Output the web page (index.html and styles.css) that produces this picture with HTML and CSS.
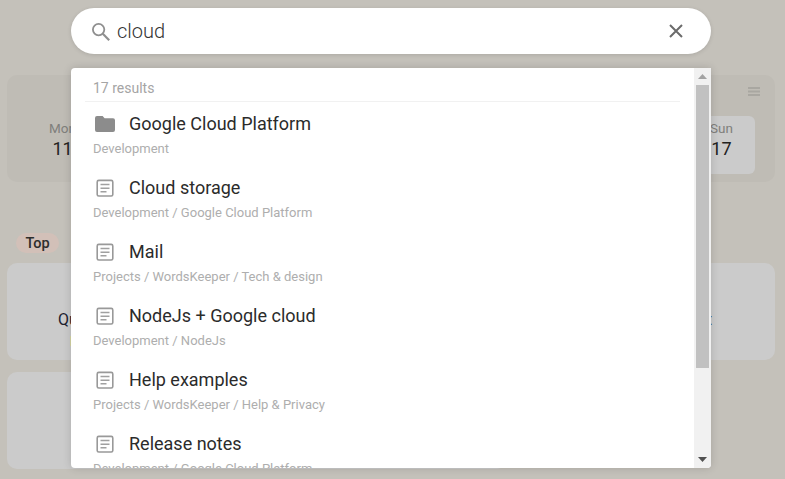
FILE: index.html
```html
<!DOCTYPE html>
<html lang="en">
<head>
<meta charset="utf-8">
<title>Search</title>
<link rel="stylesheet" href="styles.css">
</head>
<body>
<main class="page">
  <section class="week">
    <svg class="week-menu" width="12" height="9" viewBox="0 0 12 9"><path d="M0 0h12v2H0zM0 3.5h12v2H0zM0 7h12v2H0z"/></svg>
    <div class="day"><span class="day-name">Mon</span><span class="day-num">11</span></div>
    <div class="day"><span class="day-name">Tue</span><span class="day-num">12</span></div>
    <div class="day"><span class="day-name">Wed</span><span class="day-num">13</span></div>
    <div class="day"><span class="day-name">Thu</span><span class="day-num">14</span></div>
    <div class="day"><span class="day-name">Fri</span><span class="day-num">15</span></div>
    <div class="day"><span class="day-name">Sat</span><span class="day-num">16</span></div>
    <div class="day day-today"><span class="day-name">Sun</span><span class="day-num">17</span></div>
  </section>
  <span class="badge">Top</span>
  <section class="card card-wide">
    <div class="card-text"><span>Quick notes</span><span>Test</span></div>
    <div class="card-tag"></div>
  </section>
  <section class="card card-short"></section>
</main>

<div class="overlay">
  <div class="searchbar">
    <svg class="search-icon" width="20" height="20" viewBox="0 0 20 20" fill="none" stroke="#8f8f8f" stroke-width="1.8"><circle cx="7.6" cy="7.6" r="5.7"/><path d="M11.8 11.8 L18.2 18.2" stroke-width="2.2"/></svg>
    <span class="query">cloud</span>
    <svg class="clear-icon" width="14" height="14" viewBox="0 0 14 14" fill="none" stroke="#6b6b6b" stroke-width="2"><path d="M1 1 L13 13 M13 1 L1 13"/></svg>
  </div>
  <div class="results">
    <div class="results-list">
      <div class="count">17 results</div>
      <div class="row">
        <div class="row-head">
          <svg class="row-icon" width="20" height="16" viewBox="0 0 20 16"><path d="M2 0h5.6l2 2.2H18a2 2 0 0 1 2 2V14a2 2 0 0 1-2 2H2a2 2 0 0 1-2-2V2a2 2 0 0 1 2-2z" fill="#8c8c8c"/></svg>
          <span class="row-title">Google Cloud Platform</span>
        </div>
        <div class="row-path">Development</div>
      </div>
      <div class="row">
        <div class="row-head">
          <svg class="row-icon" width="20" height="16" viewBox="0 0 20 16"><use href="#doc"/></svg>
          <span class="row-title">Cloud storage</span>
        </div>
        <div class="row-path">Development / Google Cloud Platform</div>
      </div>
      <div class="row">
        <div class="row-head">
          <svg class="row-icon" width="20" height="16" viewBox="0 0 20 16"><use href="#doc"/></svg>
          <span class="row-title">Mail</span>
        </div>
        <div class="row-path">Projects / WordsKeeper / Tech &amp; design</div>
      </div>
      <div class="row">
        <div class="row-head">
          <svg class="row-icon" width="20" height="16" viewBox="0 0 20 16"><use href="#doc"/></svg>
          <span class="row-title">NodeJs + Google cloud</span>
        </div>
        <div class="row-path">Development / NodeJs</div>
      </div>
      <div class="row">
        <div class="row-head">
          <svg class="row-icon" width="20" height="16" viewBox="0 0 20 16"><use href="#doc"/></svg>
          <span class="row-title">Help examples</span>
        </div>
        <div class="row-path">Projects / WordsKeeper / Help &amp; Privacy</div>
      </div>
      <div class="row">
        <div class="row-head">
          <svg class="row-icon" width="20" height="16" viewBox="0 0 20 16"><use href="#doc"/></svg>
          <span class="row-title">Release notes</span>
        </div>
        <div class="row-path">Development / Google Cloud Platform</div>
      </div>
    </div>
    <div class="scrollbar">
      <div class="arrow-btn"><svg width="9" height="5" viewBox="0 0 9 5"><path d="M4.5 0 L9 5 H0 Z" fill="#a3a3a3"/></svg></div>
      <div class="thumb"></div>
      <div class="track-rest"></div>
      <div class="arrow-btn"><svg width="9" height="5" viewBox="0 0 9 5"><path d="M0 0 H9 L4.5 5 Z" fill="#505050"/></svg></div>
    </div>
  </div>
</div>

<svg class="defs" width="0" height="0" aria-hidden="true">
  <symbol id="doc" viewBox="0 0 20 16" overflow="visible">
    <rect x="2.2" y="0.4" width="15.6" height="15.6" rx="1.6" fill="none" stroke="#999" stroke-width="1.6"/>
    <path d="M5.5 4.6h9M5.5 8.2h9M5.5 11.8h6" stroke="#a0a0a0" stroke-width="1.5" fill="none"/>
  </symbol>
</svg>
</body>
</html>
```

FILE: styles.css
```css
* {
  box-sizing: border-box;
}

html,
body {
  margin: 0;
  height: 100%;
  overflow: hidden;
}

body {
  background: #c4c1ba;
  font-family: Roboto, "Liberation Sans", sans-serif;
  position: relative;
}

.page {
  display: flex;
  flex-direction: column;
  align-items: flex-start;
  padding: 75px 10px 0 7px;
}

.week {
  position: relative;
  width: 768px;
  height: 107px;
  margin-bottom: 51px;
  padding: 41px 20px 8px 35px;
  background: #bfbcb5;
  border-radius: 10px;
  display: flex;
  justify-content: space-between;
}

.week-menu {
  position: absolute;
  top: 12px;
  right: 15px;
  fill: #a9a7a1;
}

.day {
  width: 54px;
  height: 58px;
  padding: 4px 13px 0 0;
  border-radius: 6px;
  display: flex;
  flex-direction: column;
  align-items: center;
  gap: 1px;
}

.day-today {
  background: #cbcbcb;
}

.day-name {
  font-size: 13.5px;
  line-height: 16px;
  color: #807f7c;
}

.day-num {
  font-size: 18px;
  line-height: 24px;
  color: #22221f;
}

.badge {
  margin-left: 9px;
  height: 20px;
  padding: 1px 9.5px 0;
  border-radius: 10px;
  background: #d2c0b8;
  color: #2e2e2c;
  font-size: 14.5px;
  font-weight: 500;
  line-height: 19px;
}

.card {
  background: #cbcbcb;
  border-radius: 10px;
}

.card-wide {
  width: 768px;
  height: 97px;
  margin-top: 10px;
  margin-bottom: 12px;
  padding: 47px 0 0 51px;
  display: flex;
  flex-direction: column;
  gap: 6px;
}

.card-text {
  width: 654px;
  font-size: 16px;
  line-height: 20px;
  color: #1d2230;
  display: flex;
  justify-content: space-between;
}

.card-tag {
  width: 300px;
  height: 10px;
  margin-left: 12px;
  background: #d6d6a4;
}

.card-short {
  width: 500px;
  height: 97px;
}

.overlay {
  position: absolute;
  top: 8px;
  left: 71px;
  width: 640px;
  display: flex;
  flex-direction: column;
  gap: 14px;
}

.searchbar {
  height: 46px;
  padding: 0 28px 0 20px;
  background: #fff;
  border-radius: 23px;
  box-shadow: 0 1px 4px rgba(0, 0, 0, 0.12);
  display: flex;
  align-items: center;
}

.search-icon {
  flex: none;
  margin-top: 2px;
}

.query {
  flex: 1;
  margin-left: 6px;
  font-size: 20px;
  font-weight: 300;
  color: #333;
}

.results {
  height: 400px;
  background: #fff;
  border-radius: 4px 0 4px 4px;
  box-shadow: 0 0 8px rgba(0, 0, 0, 0.16);
  display: flex;
  overflow: hidden;
}

.results-list {
  flex: 1;
  min-width: 0;
  padding: 0 14px;
  overflow: hidden;
}

.count {
  height: 34px;
  padding: 12px 8px 0;
  font-size: 14px;
  line-height: 17px;
  color: #a5a5a5;
  border-bottom: 1px solid #f1f1f1;
}

.row {
  height: 64px;
  padding: 9px 0 0 8px;
}

.row-head {
  display: flex;
  align-items: center;
  height: 26px;
}

.row-icon {
  margin-left: 2px;
  margin-right: 14px;
  flex: none;
  overflow: visible;
}

.row-title {
  font-size: 18px;
  line-height: 26px;
  color: #2b2b2b;
}

.row-path {
  margin-top: 3px;
  font-size: 13px;
  line-height: 18px;
  color: #aeaeae;
}

.scrollbar {
  width: 17px;
  flex: none;
  background: #f1f1f1;
  display: flex;
  flex-direction: column;
}

.arrow-btn {
  height: 17px;
  flex: none;
  display: flex;
  align-items: center;
  justify-content: center;
}

.thumb {
  height: 283px;
  margin: 0 2px;
  background: #c1c1c1;
}

.track-rest {
  flex: 1;
}

.defs {
  position: absolute;
}
```
